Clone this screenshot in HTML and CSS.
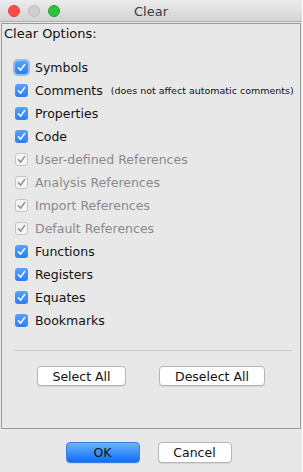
FILE: index.html
```html
<!DOCTYPE html>
<html lang="en">
<head>
    <meta charset="UTF-8">
    <title>Clear</title>
    <link rel="stylesheet" href="styles.css">
</head>
<body>
    <div class="window">
        <div class="titlebar">
            <div class="lights">
                <span class="light red"></span>
                <span class="light gray"></span>
                <span class="light green"></span>
            </div>
            <div class="title">Clear</div>
        </div>
        <div class="panel">
            <div class="panel-title">Clear Options:</div>
            <div class="options">
                <div class="option"><span class="box focus"><svg viewBox="0 0 10 10"><path d="M2.2 5.2 L4.2 7.4 L7.8 2.4"/></svg></span>Symbols</div>
                <div class="option"><span class="box"><svg viewBox="0 0 10 10"><path d="M2.2 5.2 L4.2 7.4 L7.8 2.4"/></svg></span>Comments <small>(does not affect automatic comments)</small></div>
                <div class="option"><span class="box"><svg viewBox="0 0 10 10"><path d="M2.2 5.2 L4.2 7.4 L7.8 2.4"/></svg></span>Properties</div>
                <div class="option"><span class="box"><svg viewBox="0 0 10 10"><path d="M2.2 5.2 L4.2 7.4 L7.8 2.4"/></svg></span>Code</div>
                <div class="option disabled"><span class="box"><svg viewBox="0 0 10 10"><path d="M2.2 5.2 L4.2 7.4 L7.8 2.4"/></svg></span>User-defined References</div>
                <div class="option disabled"><span class="box"><svg viewBox="0 0 10 10"><path d="M2.2 5.2 L4.2 7.4 L7.8 2.4"/></svg></span>Analysis References</div>
                <div class="option disabled"><span class="box"><svg viewBox="0 0 10 10"><path d="M2.2 5.2 L4.2 7.4 L7.8 2.4"/></svg></span>Import References</div>
                <div class="option disabled"><span class="box"><svg viewBox="0 0 10 10"><path d="M2.2 5.2 L4.2 7.4 L7.8 2.4"/></svg></span>Default References</div>
                <div class="option"><span class="box"><svg viewBox="0 0 10 10"><path d="M2.2 5.2 L4.2 7.4 L7.8 2.4"/></svg></span>Functions</div>
                <div class="option"><span class="box"><svg viewBox="0 0 10 10"><path d="M2.2 5.2 L4.2 7.4 L7.8 2.4"/></svg></span>Registers</div>
                <div class="option"><span class="box"><svg viewBox="0 0 10 10"><path d="M2.2 5.2 L4.2 7.4 L7.8 2.4"/></svg></span>Equates</div>
                <div class="option"><span class="box"><svg viewBox="0 0 10 10"><path d="M2.2 5.2 L4.2 7.4 L7.8 2.4"/></svg></span>Bookmarks</div>
            </div>
            <div class="separator"></div>
            <div class="select-row">
                <button class="btn select-all">Select All</button>
                <button class="btn deselect-all">Deselect All</button>
            </div>
        </div>
        <div class="footer">
            <button class="btn ok">OK</button>
            <button class="btn cancel">Cancel</button>
        </div>
    </div>
</body>
</html>
```

FILE: styles.css
```css
html, body {
    margin: 0;
    padding: 0;
    background: #fff;
}
body {
    font-family: 'DejaVu Sans', sans-serif;
    font-size: 13px;
    color: #111;
}
.window {
    width: 302px;
    height: 472px;
    background: #e8e8e8;
    display: flex;
    flex-direction: column;
    box-sizing: border-box;
}
.titlebar {
    height: 22px;
    background: linear-gradient(#ececec, #d3d3d3);
    border-bottom: 1px solid #b1b1b1;
    border-radius: 5px 5px 0 0;
    position: relative;
    display: flex;
    align-items: center;
    justify-content: center;
    box-sizing: border-box;
}
.lights {
    position: absolute;
    left: 8px;
    top: 5px;
    display: flex;
    gap: 8px;
}
.light {
    width: 12px;
    height: 12px;
    border-radius: 50%;
    box-sizing: border-box;
}
.red { background: #fc4b4b; border: 1px solid #e0403f; }
.gray { background: #cfcfcf; border: 1px solid #bdbdbd; }
.green { background: #2ac33b; border: 1px solid #21a530; }
.title {
    font-size: 13px;
    color: #3c3c3c;
    padding-top: 1px;
}
.panel {
    margin: 1px 1px 0 1px;
    height: 406px;
    border: 1px solid #9a9a9a;
    box-sizing: border-box;
    padding: 0 0 0 2px;
}
.panel-title {
    padding-top: 2px;
    height: 18px;
    font-size: 13px;
}
.options {
    padding: 12px 0 0 11px;
}
.option {
    height: 23px;
    display: flex;
    align-items: center;
    gap: 7px;
    font-size: 12.5px;
    white-space: nowrap;
}
.option small {
    font-size: 9.5px;
    margin-left: 1px;
}
.box {
    width: 13px;
    height: 13px;
    border-radius: 3px;
    background: linear-gradient(#57a2fb, #2a7ef6);
    box-sizing: border-box;
    display: flex;
    align-items: center;
    justify-content: center;
    flex-shrink: 0;
}
.box svg {
    width: 11px;
    height: 11px;
}
.box path {
    fill: none;
    stroke: #fff;
    stroke-width: 1.4;
    stroke-linecap: round;
    stroke-linejoin: round;
}
.box.focus {
    box-shadow: 0 0 0 2px rgba(90, 150, 245, 0.55);
}
.disabled {
    color: #8a8a8a;
}
.disabled .box {
    background: #f4f4f4;
    border: 1px solid #c4c4c4;
}
.disabled .box path {
    stroke: #8f8f8f;
}
.separator {
    margin: 18px 8px 0 10px;
    border-top: 1px solid #c8c8c8;
}
.select-row {
    display: flex;
    justify-content: center;
    gap: 33px;
    padding-top: 15px;
    padding-right: 2px;
}
.btn {
    font-family: 'DejaVu Sans', sans-serif;
    font-size: 12.5px;
    color: #111;
    background: #fff;
    border: 1px solid #b5b5b5;
    border-radius: 4px;
    height: 20px;
    padding: 0;
    box-shadow: 0 1px 0 rgba(0, 0, 0, 0.08);
}
.select-all { width: 89px; }
.deselect-all { width: 106px; }
.footer {
    display: flex;
    justify-content: center;
    gap: 18px;
    padding-top: 13px;
    padding-right: 5px;
}
.ok, .cancel {
    width: 74px;
    height: 21px;
}
.ok {
    background: linear-gradient(#6cb3fa, #0d6ef9);
    border-color: #3b7ee6;
}
```
